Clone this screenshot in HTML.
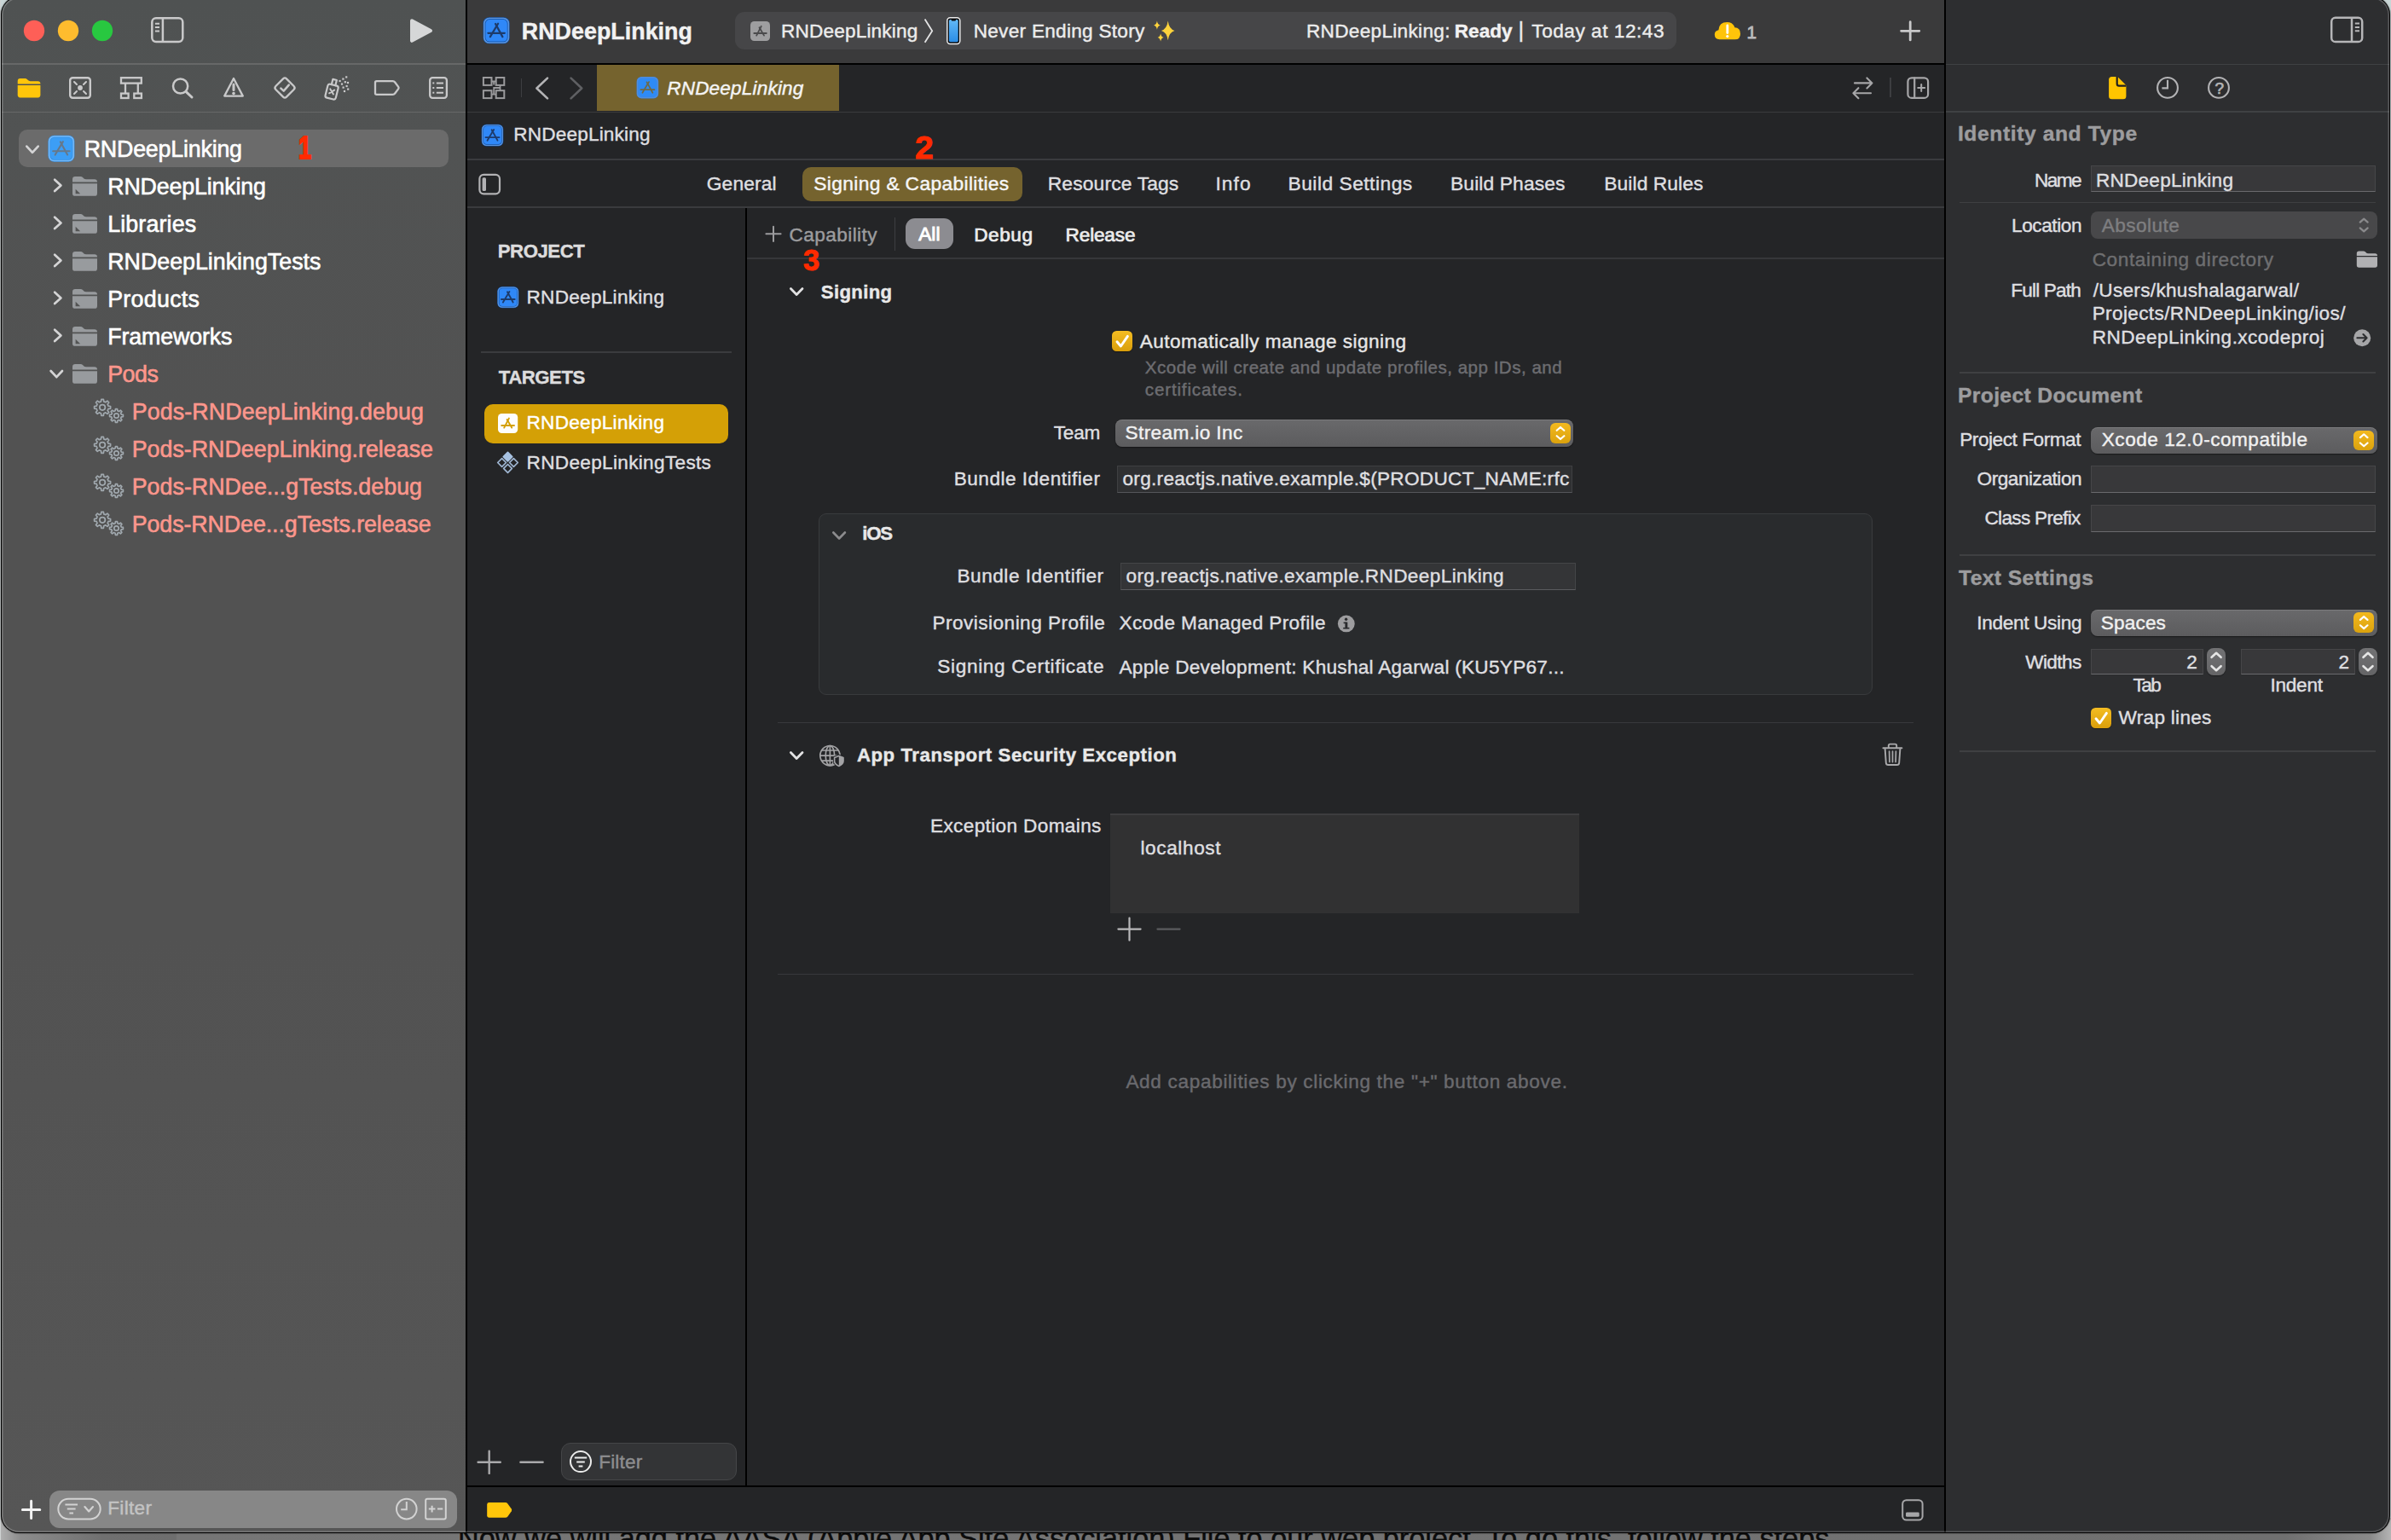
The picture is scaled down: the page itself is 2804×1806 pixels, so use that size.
<!DOCTYPE html>
<html lang="en"><head><meta charset="utf-8"><title>RNDeepLinking — Signing &amp; Capabilities</title>
<style>
*{box-sizing:border-box;margin:0;padding:0}
html,body{width:2804px;height:1806px;overflow:hidden;background:#c4d4d4}
body{font-family:"Liberation Sans",sans-serif;position:relative}
#root{position:absolute;left:0;top:0;width:2804px;height:1806px;overflow:hidden;background:#c9d6d6}
.a{position:absolute}
.t{position:absolute;white-space:pre;line-height:1;-webkit-text-stroke:0.42px}
svg{position:absolute;overflow:visible}
.ln{position:absolute;height:2px}
</style></head>
<body><div id="root">
<div class="a" style="left:0;top:1780px;width:2804px;height:26px;background:linear-gradient(90deg,#b0b0b0 0px,#8c8c8c 24px,#707070 120px,#6e6e6e 206px,#767676 208px,#707070 2680px,#8a8a8a 2780px,#b4b4b4 2804px)"></div>
<span class="t" id="btm" style="left:537px;top:1787px;font-size:34.3px;color:#0c0c0c;letter-spacing:0px">Now we will add the AASA (Apple App Site Association) File to our web project. To do this, follow the steps</span>
<div class="a" style="left:0;top:0;width:1.4px;height:1806px;background:#cfd3d3"></div>
<div class="a" style="left:1px;top:-4px;width:2802px;height:1802px;border-radius:21px;background:#000;box-shadow:0 0 2px rgba(0,0,0,.6)"></div>
<div class="a" id="win" style="left:2px;top:-3px;width:2800px;height:1800px;border-radius:20px;overflow:hidden">
<div class="a" style="left:-2px;top:3px;width:2804px;height:1806px">
<div class="a" style="left:2px;top:0px;width:544px;height:1797px;background:linear-gradient(#4f5252 0px,#515353 160px,#525252 500px,#525252 1100px,#565656 1797px)"></div>
<div class="a" style="left:2px;top:74px;width:544px;height:1.5px;background:#676868"></div>
<div class="a" style="left:2px;top:130.5px;width:544px;height:1.5px;background:#676868"></div>
<div class="a" style="left:546px;top:0px;width:2px;height:1797px;background:#000"></div>
<div class="a" style="left:548px;top:0px;width:1732px;height:74px;background:#3a3a3b"></div>
<div class="a" style="left:548px;top:74px;width:1732px;height:2px;background:#000"></div>
<div class="a" style="left:548px;top:76px;width:1732px;height:1721px;background:#242527"></div>
<div class="a" style="left:548px;top:130.5px;width:1732px;height:1.5px;background:#3a3b3e"></div>
<div class="a" style="left:548px;top:186px;width:1732px;height:1.5px;background:#3a3b3e"></div>
<div class="a" style="left:548px;top:242.3px;width:1732px;height:1.5px;background:#3a3b3e"></div>
<div class="a" style="left:876px;top:302px;width:1404px;height:1.5px;background:#36373a"></div>
<div class="a" style="left:699.8px;top:76px;width:284.4px;height:54.3px;background:#75632e"></div>
<div class="a" style="left:874px;top:243.8px;width:2.3px;height:1498.2px;background:#000"></div>
<div class="a" style="left:548px;top:1742px;width:1732px;height:2px;background:#000"></div>
<div class="a" style="left:2280px;top:0px;width:2px;height:1797px;background:#000"></div>
<div class="a" style="left:2282px;top:0px;width:520px;height:1797px;background:#2d2e30"></div>
<div class="a" style="left:2282px;top:74.5px;width:520px;height:1.5px;background:#3f4143"></div>
<div class="a" style="left:2282px;top:130px;width:520px;height:1.5px;background:#3f4143"></div>

<div class="a" style="left:22px;top:152px;width:504px;height:43.5px;background:#6b6b6b;border-radius:10px"></div>
<div class="a" style="left:58px;top:1748px;width:477.8px;height:43.6px;background:#878787;border-radius:12px"></div>
<div class="a" style="left:862px;top:14px;width:1104px;height:44px;background:#464648;border-radius:11px"></div>
<div class="a" style="left:941px;top:196px;width:257.6px;height:40px;background:#75632e;border-radius:10px"></div>
<div class="a" style="left:1062px;top:256px;width:56px;height:35.8px;background:#8c8c91;border-radius:11px"></div>
<div class="a" style="left:1048.5px;top:254.7px;width:1.5px;height:38.9px;background:#3d3e41"></div>
<div class="a" style="left:610.5px;top:91.6px;width:1.5px;height:22.4px;background:#3d3e41"></div>
<div class="a" style="left:2216px;top:90.8px;width:1.5px;height:23.2px;background:#3d3e41"></div>
<div class="a" style="left:563.8px;top:412.3px;width:294.4px;height:1.5px;background:#3a3b3e"></div>
<div class="a" style="left:568px;top:474px;width:286.2px;height:45.8px;background:#d4a006;border-radius:10px"></div>
<div class="a" style="left:658.3px;top:1692.3px;width:205.6px;height:43.3px;background:#333436;border:1.5px solid #454648;border-radius:11px"></div>
<div class="a" style="left:1304px;top:388px;width:24px;height:24.2px;background:linear-gradient(#f5bd22,#d99e0b);border-radius:5.5px;box-shadow:0 0.5px 1px rgba(0,0,0,.4)"></div>
<div class="a" style="left:1308px;top:492.2px;width:537.3px;height:31.4px;background:linear-gradient(#69696b,#5c5c5e);border-radius:8px;box-shadow:0 1px 1.5px rgba(0,0,0,.45), inset 0 1px 0 rgba(255,255,255,.12)"></div>
<div class="a" style="left:1818px;top:496px;width:24px;height:24px;background:linear-gradient(#f3b91e,#dba20d);border-radius:6px"></div>
<div class="a" style="left:1310.2px;top:546.4px;width:533.6px;height:31.4px;background:#2f3032;border:1px solid #3f4042;border-bottom-color:#55565a"></div>
<div class="a" style="left:960.2px;top:602.4px;width:1235.5px;height:213.0px;background:#292b2d;border:1.5px solid #393b3d;border-radius:9px"></div>
<div class="a" style="left:1314px;top:660.4px;width:534px;height:31.2px;background:#343537;border:1px solid #444547;border-bottom-color:#5a5b5e"></div>
<div class="a" style="left:912px;top:846.5px;width:1332px;height:1.5px;background:#38393c"></div>
<div class="a" style="left:912px;top:1141.8px;width:1332px;height:1.5px;background:#38393c"></div>
<div class="a" style="left:1302px;top:954px;width:550px;height:117.4px;background:#313132;border-top:2px solid #3d3d3f"></div>
<div class="a" style="left:2452px;top:194.4px;width:334px;height:31.1px;background:#38383a;border:1px solid #464648;border-bottom-color:#6a6a6d"></div>
<div class="a" style="left:2298px;top:236.5px;width:488px;height:1.5px;background:#3f4042"></div>
<div class="a" style="left:2452px;top:248.2px;width:336px;height:31.6px;background:#48484a;border-radius:8px"></div>
<div class="a" style="left:2298px;top:436px;width:488px;height:1.5px;background:#3f4042"></div>
<div class="a" style="left:2452px;top:500.5px;width:336px;height:31.1px;background:linear-gradient(#69696b,#5c5c5e);border-radius:8px;box-shadow:0 1px 1.5px rgba(0,0,0,.45), inset 0 1px 0 rgba(255,255,255,.12)"></div>
<div class="a" style="left:2760.3px;top:504.5px;width:23.7px;height:23.6px;background:linear-gradient(#f3b91e,#dba20d);border-radius:6px"></div>
<div class="a" style="left:2452px;top:546.1px;width:334px;height:31.6px;background:#38383a;border:1px solid #464648;border-bottom-color:#6a6a6d"></div>
<div class="a" style="left:2452px;top:592.4px;width:334px;height:31.4px;background:#38383a;border:1px solid #464648;border-bottom-color:#6a6a6d"></div>
<div class="a" style="left:2298px;top:650.2px;width:488px;height:1.5px;background:#3f4042"></div>
<div class="a" style="left:2452px;top:714.5px;width:336px;height:31.1px;background:linear-gradient(#69696b,#5c5c5e);border-radius:8px;box-shadow:0 1px 1.5px rgba(0,0,0,.45), inset 0 1px 0 rgba(255,255,255,.12)"></div>
<div class="a" style="left:2760.3px;top:718.4px;width:23.7px;height:23.4px;background:linear-gradient(#f3b91e,#dba20d);border-radius:6px"></div>
<div class="a" style="left:2452px;top:760.6px;width:132px;height:30.8px;background:#38383a;border:1px solid #464648;border-bottom-color:#6a6a6d"></div>
<div class="a" style="left:2627.7px;top:760.6px;width:134.0px;height:30.8px;background:#38383a;border:1px solid #464648;border-bottom-color:#6a6a6d"></div>
<div class="a" style="left:2588px;top:760px;width:22.2px;height:32px;background:linear-gradient(#727274,#646466);border-radius:8px;box-shadow:0 1px 1px rgba(0,0,0,.4)"></div>
<div class="a" style="left:2766px;top:760px;width:22px;height:32px;background:linear-gradient(#727274,#646466);border-radius:8px;box-shadow:0 1px 1px rgba(0,0,0,.4)"></div>
<div class="a" style="left:2452px;top:830px;width:24.2px;height:24.1px;background:linear-gradient(#f5bd22,#d99e0b);border-radius:5.5px;box-shadow:0 0.5px 1px rgba(0,0,0,.4)"></div>
<div class="a" style="left:2298px;top:880.3px;width:488px;height:1.5px;background:#3f4042"></div>

<svg width="2804" height="1806" viewBox="0 0 2804 1806" style="left:0;top:0">
<circle cx="40" cy="36" r="12.2" fill="#fe5f57"/><circle cx="80" cy="36" r="12.2" fill="#febc2e"/><circle cx="120" cy="36" r="12.2" fill="#28c840"/><g fill="none" stroke="#c9c9ca" stroke-width="2.5"><rect x="178.3" y="21.3" width="36" height="27.6" rx="4.6"/><path d="M190.9 21.3V48.9"/><path d="M181.9 27.7H187M181.9 32.1H187M181.9 36.5H187" stroke-width="2"/></g><path d="M483 24.2 L505 36 L483 47.8 Z" fill="#d6d7d8" stroke="#d6d7d8" stroke-width="4" stroke-linejoin="round"/><path d="M20.7 95.13 Q20.7 92.0 23.65 92.0 H29.45 Q30.83 92.0 31.75 92.98 L33.13 94.35 Q33.87 95.13 35.43 95.13 H44.45 Q47.4 95.13 47.4 98.07 V98.46 H20.7 Z" fill="#ffc60a"/><path d="M20.7 100.02 H47.4 V111.37 Q47.4 114.5 44.45 114.5 H23.65 Q20.7 114.5 20.7 111.37 Z" fill="#ffc60a"/><g fill="none" stroke="#c9c9ca" stroke-width="2.4" stroke-linecap="round"><rect x="82.2" y="91.2" width="23.6" height="23.6" rx="3"/><path d="M98 99L101 96M90 99L87 96M98 107L101 110M90 107L87 110" stroke-width="2.1"/></g><circle cx="94" cy="103" r="2.9" fill="#c9c9ca"/><g fill="none" stroke="#c9c9ca" stroke-width="2.3"><rect x="142" y="91.2" width="23.8" height="6.4"/><path d="M147 97.6V109.5M161.8 97.6V109.5"/><rect x="142" y="109.6" width="8.6" height="5.4"/><rect x="157.3" y="109.6" width="8.6" height="5.4"/></g><g fill="none" stroke="#c9c9ca" stroke-width="2.5" stroke-linecap="round"><circle cx="211.6" cy="101" r="8.6"/><path d="M218.2 107.6L225 114" stroke-width="3"/></g><path d="M274 92 L284.8 112.6 H263.2 Z" fill="none" stroke="#c9c9ca" stroke-width="2.3" stroke-linejoin="round"/><path d="M274 99V105.6" stroke="#c9c9ca" stroke-width="3" stroke-linecap="round"/><circle cx="274" cy="109.6" r="1.8" fill="#c9c9ca"/><g fill="none" stroke="#c9c9ca" stroke-width="2.3" stroke-linejoin="round" stroke-linecap="round"><rect x="325.1" y="94.1" width="17.8" height="17.8" rx="2.8" transform="rotate(45 334 103)"/><path d="M329.4 103.6 L332.7 106.6 L338.8 99.6" stroke-width="2.5"/></g><g transform="rotate(14 389.5 106)" fill="none" stroke="#c9c9ca" stroke-width="2.2" stroke-linejoin="round" stroke-linecap="round"><rect x="383.2" y="99.5" width="12.6" height="16.4" rx="2.4"/><path d="M387.2 99.5V93H391.8V99.5"/><path d="M387 105L392 110M392 105L387 110" stroke-width="2"/></g><rect x="397.5" y="93.9" width="2.2" height="2.2" fill="#c9c9ca"/><rect x="401.29999999999995" y="91.5" width="2.2" height="2.2" fill="#c9c9ca"/><rect x="405.09999999999997" y="89.30000000000001" width="2.2" height="2.2" fill="#c9c9ca"/><rect x="399.9" y="97.5" width="2.2" height="2.2" fill="#c9c9ca"/><rect x="403.7" y="95.10000000000001" width="2.2" height="2.2" fill="#c9c9ca"/><rect x="406.9" y="95.9" width="2.2" height="2.2" fill="#c9c9ca"/><rect x="401.5" y="101.5" width="2.2" height="2.2" fill="#c9c9ca"/><rect x="405.5" y="99.9" width="2.2" height="2.2" fill="#c9c9ca"/><rect x="407.09999999999997" y="103.5" width="2.2" height="2.2" fill="#c9c9ca"/><rect x="402.9" y="105.9" width="2.2" height="2.2" fill="#c9c9ca"/><path d="M441.6 95.2 H460.6 Q462.2 95.2 463.2 96.5 L467.2 101.8 Q468 103 467.2 104.2 L463.2 109.5 Q462.2 110.8 460.6 110.8 H441.6 Q440 110.8 440 109.2 V96.8 Q440 95.2 441.6 95.2 Z" fill="none" stroke="#c9c9ca" stroke-width="2.3"/><g fill="none" stroke="#c9c9ca" stroke-width="2.3"><rect x="504.2" y="91.2" width="19.7" height="23.6" rx="3"/><path d="M511.8 97.4H520M511.8 103H520M511.8 108.7H520" stroke-width="2"/></g><rect x="507.3" y="96.4" width="2" height="2" fill="#c9c9ca"/><rect x="507.3" y="102" width="2" height="2" fill="#c9c9ca"/><rect x="507.3" y="107.7" width="2" height="2" fill="#c9c9ca"/>
<g transform="translate(566.6 20.3)"><rect x="0" y="0" width="31.0" height="31.0" rx="7.03" fill="#0c50a8"/><rect x="0.47" y="0.47" width="30.07" height="30.07" rx="6.61" fill="#5b94de"/><rect x="2.07" y="2.07" width="26.87" height="26.87" rx="5.17" fill="#0c50a8"/><rect x="2.79" y="2.79" width="25.42" height="25.42" rx="4.55" fill="#2f88f8"/><g stroke="#1c3560" stroke-width="2.27" stroke-linecap="round" fill="none" opacity="0.92"><path d="M17.46 7.44 L8.27 22.84"/><path d="M14.47 7.75 L22.73 22.84"/><path d="M5.79 18.5 H25.21"/></g></g><rect x="880" y="25" width="23" height="23" rx="4.5" fill="#9e9ea0"/><g stroke="#4b4b4d" stroke-width="1.8" stroke-linecap="round" fill="none"><path d="M892.7 30.8L887.2 41.6"/><path d="M890.5 32.2L896 41.6"/><path d="M884.3 39H898.8"/></g><path d="M1084.6 22.6 L1093.2 36.2 L1084.6 49.8" fill="none" stroke="#e4e4e5" stroke-width="1.8" stroke-linejoin="miter"/><linearGradient id="phg" x1="0" y1="0" x2="0" y2="1"><stop offset="0" stop-color="#62b8f6"/><stop offset="1" stop-color="#2a8de6"/></linearGradient><rect x="1110.8" y="20.8" width="15" height="30.6" rx="3.4" fill="#0b0b0c" stroke="#e9e9ea" stroke-width="1.5"/><rect x="1112.9" y="23" width="10.8" height="26.2" rx="1.6" fill="url(#phg)"/><rect x="1115.6" y="22.4" width="5.4" height="2" rx="1" fill="#0b0b0c"/><path d="M1369.7 24.5 Q1370.948 34.076 1377.5 35.9 Q1370.948 37.724 1369.7 47.3 Q1368.452 37.724 1361.9 35.9 Q1368.452 34.076 1369.7 24.5 Z" fill="#fdd33c"/><path d="M1356.9 24.400000000000002 Q1357.5240000000001 28.768 1360.8000000000002 29.6 Q1357.5240000000001 30.432000000000002 1356.9 34.800000000000004 Q1356.276 30.432000000000002 1353.0 29.6 Q1356.276 28.768 1356.9 24.400000000000002 Z" fill="#fdd33c"/><path d="M1361.1 39.199999999999996 Q1361.6599999999999 43.147999999999996 1364.6 43.9 Q1361.6599999999999 44.652 1361.1 48.6 Q1360.54 44.652 1357.6 43.9 Q1360.54 43.147999999999996 1361.1 39.199999999999996 Z" fill="#fdd33c"/><path d="M2016.6 46.2 Q2010.8 46.2 2010.8 40.6 Q2010.8 36 2015.4 35.2 Q2016 26 2025.4 26 Q2032.2 26 2034.4 32.2 Q2041 32.6 2041 39.4 Q2041 46.2 2034.6 46.2 Z" fill="#ffc40a"/><path d="M2025.8 30V38.6" stroke="#fff" stroke-width="2.8" stroke-linecap="round"/><circle cx="2025.8" cy="42.6" r="1.6" fill="#fff"/><path d="M2229.6 36.3H2250.8M2240.2 25.7V46.9" stroke="#c9c9ca" stroke-width="2.8" stroke-linecap="round"/><g fill="none" stroke="#b6b6b8" stroke-width="2.5"><rect x="2734.2" y="20.8" width="36" height="28.2" rx="4.6"/><path d="M2758 20.8V49"/><path d="M2761.8 27.6H2767M2761.8 31.9H2767M2761.8 36.2H2767" stroke-width="2"/></g><g fill="none" stroke="#9b9b9d" stroke-width="2"><rect x="566.9" y="91" width="9.6" height="8.9"/><rect x="581.7" y="91" width="9.6" height="8.9"/><rect x="566.9" y="106.2" width="9.6" height="8.9"/><rect x="581.7" y="106.2" width="9.6" height="8.9"/><path d="M576.5 95.5H581.7M576.5 110.6H581.7M586.5 99.9V106.2M579.2 95.5V99.5M579.2 110.6V103H586.5" stroke-width="1.8"/></g><path d="M642 91.6 L629.4 103.5 L642 115.4" fill="none" stroke="#b4b4b6" stroke-width="2.6" stroke-linecap="round" stroke-linejoin="round"/><path d="M669.6 91.6 L682.2 103.5 L669.6 115.4" fill="none" stroke="#5f6063" stroke-width="2.6" stroke-linecap="round" stroke-linejoin="round"/><g transform="translate(746.6 89.9)"><rect x="0" y="0" width="25.6" height="25.6" rx="5.8" fill="#3a84e6"/><rect x="0.38" y="0.38" width="24.83" height="24.83" rx="5.46" fill="#4f8fdf"/><rect x="1.71" y="1.71" width="22.19" height="22.19" rx="4.27" fill="#3a84e6"/><rect x="2.3" y="2.3" width="20.99" height="20.99" rx="3.75" fill="#2e8bf6"/><g stroke="#6e6a48" stroke-width="1.71" stroke-linecap="round" fill="none" opacity="1"><path d="M14.42 6.14 L6.83 18.86"/><path d="M11.95 6.4 L18.77 18.86"/><path d="M4.78 15.27 H20.82"/></g></g><g fill="none" stroke="#a6a6a8" stroke-width="2.1" stroke-linecap="round" stroke-linejoin="round"><path d="M2175 97.4H2195.4M2189.4 91.4L2195.4 97.4L2189.4 103.4"/><path d="M2194 109.2H2173.4M2179.4 103.2L2173.4 109.2L2179.4 115.2"/></g><g fill="none" stroke="#a6a6a8" stroke-width="2.2" stroke-linecap="round"><rect x="2237.4" y="91.3" width="23.7" height="23.6" rx="4.5"/><path d="M2245.2 91.3V114.9"/><path d="M2249.2 103.1H2257.2M2253.2 99.1V107.1" stroke-width="2"/></g><g transform="translate(564.7 145.8)"><rect x="0" y="0" width="25.6" height="25.6" rx="5.8" fill="#0c50a8"/><rect x="0.38" y="0.38" width="24.83" height="24.83" rx="5.46" fill="#5b94de"/><rect x="1.71" y="1.71" width="22.19" height="22.19" rx="4.27" fill="#0c50a8"/><rect x="2.3" y="2.3" width="20.99" height="20.99" rx="3.75" fill="#2f88f8"/><g stroke="#1c3560" stroke-width="1.88" stroke-linecap="round" fill="none" opacity="0.92"><path d="M14.42 6.14 L6.83 18.86"/><path d="M11.95 6.4 L18.77 18.86"/><path d="M4.78 15.27 H20.82"/></g></g><rect x="562.4" y="204.9" width="23.6" height="22.4" rx="4.8" fill="none" stroke="#b2b2b4" stroke-width="2.2"/><rect x="565.6" y="208.2" width="4.4" height="15.8" rx="1.6" fill="#b2b2b4"/><g transform="translate(583.2 336)"><rect x="0" y="0" width="25.2" height="25.2" rx="5.71" fill="#0c50a8"/><rect x="0.38" y="0.38" width="24.44" height="24.44" rx="5.38" fill="#5b94de"/><rect x="1.68" y="1.68" width="21.84" height="21.84" rx="4.2" fill="#0c50a8"/><rect x="2.27" y="2.27" width="20.66" height="20.66" rx="3.7" fill="#2f88f8"/><g stroke="#1c3560" stroke-width="1.85" stroke-linecap="round" fill="none" opacity="0.92"><path d="M14.2 6.05 L6.72 18.56"/><path d="M11.76 6.3 L18.48 18.56"/><path d="M4.7 15.04 H20.5"/></g></g><rect x="584" y="485" width="23.2" height="23" rx="4.5" fill="#fdfdfd"/><g stroke="#d4a006" stroke-width="1.9" stroke-linecap="round" fill="none"><path d="M596.9 490.6L591.2 501.6"/><path d="M594.6 492L600.2 501.6"/><path d="M588.2 499H603"/></g><path d="M595.5 530.4 L600.7 535.6 L595.5 540.8000000000001 L590.3 535.6 Z" fill="#a8c3e3" stroke="#a8c3e3" stroke-width="1.7" stroke-linejoin="round"/><path d="M588.6 537.6 L593.5 542.5 L588.6 547.4 L583.7 542.5 Z" fill="none" stroke="#9fb6d2" stroke-width="1.7" stroke-linejoin="round"/><path d="M602.4 537.6 L607.3 542.5 L602.4 547.4 L597.5 542.5 Z" fill="none" stroke="#9fb6d2" stroke-width="1.7" stroke-linejoin="round"/><path d="M595.5 544.5 L600.4 549.4 L595.5 554.3 L590.6 549.4 Z" fill="none" stroke="#9fb6d2" stroke-width="1.7" stroke-linejoin="round"/><path d="M898.4 274.3H915.6M907 265.7V282.9" stroke="#9c9c9e" stroke-width="2" stroke-linecap="round"/><path d="M927.4000000000001 338.5 L934.2 345.5 L941.0 338.5" fill="none" stroke="#e2e2e3" stroke-width="2.8" stroke-linecap="round" stroke-linejoin="round"/><path d="M977.3000000000001 624.5 L984.1 631.5 L990.9 624.5" fill="none" stroke="#8b8b8d" stroke-width="2.6" stroke-linecap="round" stroke-linejoin="round"/><path d="M927.4000000000001 882.5 L934.2 889.5 L941.0 882.5" fill="none" stroke="#e2e2e3" stroke-width="2.8" stroke-linecap="round" stroke-linejoin="round"/><path d="M1310 400.8 L1314.4 406 L1322.4 394.4" fill="none" stroke="#fff" stroke-width="2.9" stroke-linecap="round" stroke-linejoin="round"/><path d="M2458 842.8 L2462.4 848 L2470.4 836.4" fill="none" stroke="#fff" stroke-width="2.9" stroke-linecap="round" stroke-linejoin="round"/><path d="M1825.7 504.8 L1830 501.0 L1834.3 504.8M1825.7 511.2 L1830 515.0 L1834.3 511.2" fill="none" stroke="#fff" stroke-width="2.2" stroke-linecap="round" stroke-linejoin="round"/><path d="M2767.8999999999996 513.0999999999999 L2772.2 509.2999999999999 L2776.5 513.0999999999999M2767.8999999999996 519.5 L2772.2 523.3 L2776.5 519.5" fill="none" stroke="#fff" stroke-width="2.2" stroke-linecap="round" stroke-linejoin="round"/><path d="M2767.8999999999996 726.9 L2772.2 723.1 L2776.5 726.9M2767.8999999999996 733.3000000000001 L2772.2 737.1 L2776.5 733.3000000000001" fill="none" stroke="#fff" stroke-width="2.2" stroke-linecap="round" stroke-linejoin="round"/><path d="M2767.7 260.6 L2772.2 256.6 L2776.7 260.6M2767.7 267.4 L2772.2 271.4 L2776.7 267.4" fill="none" stroke="#8a8a8c" stroke-width="2.2" stroke-linecap="round" stroke-linejoin="round"/><path d="M2593.6 770.8 L2599.1 765.8 L2604.6 770.8M2593.6 781.2 L2599.1 786.2 L2604.6 781.2" fill="none" stroke="#e6e6e6" stroke-width="2.6" stroke-linecap="round" stroke-linejoin="round"/><path d="M2771.5 770.8 L2777 765.8 L2782.5 770.8M2771.5 781.2 L2777 786.2 L2782.5 781.2" fill="none" stroke="#e6e6e6" stroke-width="2.6" stroke-linecap="round" stroke-linejoin="round"/><circle cx="1578.8" cy="731.4" r="9.9" fill="#9d9d9f"/><rect x="1577.4" y="729.6" width="2.9" height="7.6" fill="#2a2b2d"/><rect x="1575.6" y="729.6" width="3.4" height="1.6" fill="#2a2b2d"/><rect x="1575.2" y="735.9" width="7.2" height="1.6" fill="#2a2b2d"/><circle cx="1578.6" cy="726.2" r="1.7" fill="#2a2b2d"/>
<g fill="none" stroke="#a3a3a5" stroke-width="1.7"><circle cx="973.4" cy="886.1" r="11.6"/><ellipse cx="973.4" cy="886.1" rx="5.2" ry="11.6"/><path d="M973.4 874.5V897.7M961.8 886.1H985M963.6 880H983.2M963.6 892.2H983.2"/></g><path d="M983.8 884.6 L990.6 887.2 V892.6 Q990.6 897.4 983.8 900 Q977 897.4 977 892.6 V887.2 Z" fill="#232427"/><path d="M983.8 886.4 L989 888.4 V892.6 Q989 896.2 983.8 898.4 Q978.6 896.2 978.6 892.6 V888.4 Z" fill="none" stroke="#a3a3a5" stroke-width="1.6" stroke-linejoin="round"/><path d="M983.8 886.4 L989 888.4 V892.6 Q989 896.2 983.8 898.4 Z" fill="#a3a3a5"/><g fill="none" stroke="#a9a9ab" stroke-width="1.9" stroke-linecap="round" stroke-linejoin="round"><path d="M2208.4 877.2H2230.4"/><path d="M2214.8 877V874.4Q2214.8 872.6 2216.6 872.6H2222.4Q2224.2 872.6 2224.2 874.4V877"/><path d="M2210.6 877.6L2211.8 894.6Q2212 897 2214.4 897H2224.6Q2227 897 2227.2 894.6L2228.4 877.6"/><path d="M2215.6 881L2215.9 893.6M2219.5 881V893.6M2223.4 881L2223.1 893.6" stroke-width="1.7"/></g><path d="M1311.4 1089.6H1337.6M1324.5 1076.5V1102.7" stroke="#b9b9bb" stroke-width="2.2" stroke-linecap="round"/><path d="M1357.4 1089.6H1383.6" stroke="#5b5c5f" stroke-width="2.2" stroke-linecap="round"/><path d="M2476.6 89.9 H2483.4 L2493.4 99.9 V112.8 Q2493.4 116.3 2489.9 116.3 H2476.6 Q2473.1 116.3 2473.1 112.8 V93.4 Q2473.1 89.9 2476.6 89.9 Z" fill="#ffc500"/><path d="M2482.7 89.9 V98.2 Q2482.7 100.6 2485.1 100.6 H2493.4" fill="none" stroke="#1e1e20" stroke-width="2.2"/><g fill="none" stroke="#b3b3b5" stroke-width="2.1" stroke-linecap="butt"><circle cx="2542" cy="102.9" r="11.9"/><path d="M2542 93.8V103.4H2535.4"/><circle cx="2602" cy="102.9" r="11.9"/></g><path d="M2763.8 297.17 Q2763.8 294.5 2766.47 294.5 H2771.73 Q2772.98 294.5 2773.81 295.33 L2775.07 296.5 Q2775.73 297.17 2777.15 297.17 H2785.33 Q2788.0 297.17 2788.0 299.68 V300.01 H2763.8 Z" fill="#b1b1b3"/><path d="M2763.8 301.35 H2788.0 V311.03 Q2788.0 313.7 2785.33 313.7 H2766.47 Q2763.8 313.7 2763.8 311.03 Z" fill="#b1b1b3"/><circle cx="2770.2" cy="396.2" r="10" fill="#a6a6a8"/><path d="M2764.4 396.2H2775.4M2771.4 392L2775.6 396.2L2771.4 400.4" fill="none" stroke="#2d2e30" stroke-width="2.1" stroke-linecap="round" stroke-linejoin="round"/><path d="M31.3 171.6 L38 178.79999999999998 L44.7 171.6" fill="none" stroke="#d4d4d5" stroke-width="2.7" stroke-linecap="round" stroke-linejoin="round"/><g transform="translate(56.4 158.7)"><rect x="0" y="0" width="31.0" height="31.0" rx="7.03" fill="#3390e6"/><rect x="0.47" y="0.47" width="30.07" height="30.07" rx="6.61" fill="#74b8f6"/><rect x="2.07" y="2.07" width="26.87" height="26.87" rx="5.17" fill="#3390e6"/><rect x="2.79" y="2.79" width="25.42" height="25.42" rx="4.55" fill="#3c9ef5"/><g stroke="#66788a" stroke-width="2.07" stroke-linecap="round" fill="none" opacity="1"><path d="M17.46 7.44 L8.27 22.84"/><path d="M14.47 7.75 L22.73 22.84"/><path d="M5.79 18.5 H25.21"/></g></g><path d="M64.14999999999999 210.70000000000002 L71.45 217.4 L64.14999999999999 224.1" fill="none" stroke="#d4d4d5" stroke-width="2.7" stroke-linecap="round" stroke-linejoin="round"/><path d="M85.0 210.17 Q85.0 207.0 88.2 207.0 H94.5 Q96.0 207.0 97.0 207.99 L98.5 209.38 Q99.3 210.17 101.0 210.17 H110.8 Q114.0 210.17 114.0 213.15 V213.54 H85.0 Z" fill="#989b9e"/><path d="M85.0 215.13 H114.0 V226.63 Q114.0 229.8 110.8 229.8 H88.2 Q85.0 229.8 85.0 226.63 Z" fill="#989b9e"/><path d="M88.6 221.87 L94.2 227.22 H88.6 Z" fill="#535454"/><path d="M64.14999999999999 254.7 L71.45 261.4 L64.14999999999999 268.09999999999997" fill="none" stroke="#d4d4d5" stroke-width="2.7" stroke-linecap="round" stroke-linejoin="round"/><path d="M85.0 254.17 Q85.0 251.0 88.2 251.0 H94.5 Q96.0 251.0 97.0 251.99 L98.5 253.38 Q99.3 254.17 101.0 254.17 H110.8 Q114.0 254.17 114.0 257.15 V257.54 H85.0 Z" fill="#989b9e"/><path d="M85.0 259.13 H114.0 V270.63 Q114.0 273.8 110.8 273.8 H88.2 Q85.0 273.8 85.0 270.63 Z" fill="#989b9e"/><path d="M88.6 265.87 L94.2 271.22 H88.6 Z" fill="#535454"/><path d="M64.14999999999999 298.7 L71.45 305.4 L64.14999999999999 312.09999999999997" fill="none" stroke="#d4d4d5" stroke-width="2.7" stroke-linecap="round" stroke-linejoin="round"/><path d="M85.0 298.17 Q85.0 295.0 88.2 295.0 H94.5 Q96.0 295.0 97.0 295.99 L98.5 297.38 Q99.3 298.17 101.0 298.17 H110.8 Q114.0 298.17 114.0 301.15 V301.54 H85.0 Z" fill="#989b9e"/><path d="M85.0 303.13 H114.0 V314.63 Q114.0 317.8 110.8 317.8 H88.2 Q85.0 317.8 85.0 314.63 Z" fill="#989b9e"/><path d="M64.14999999999999 342.7 L71.45 349.4 L64.14999999999999 356.09999999999997" fill="none" stroke="#d4d4d5" stroke-width="2.7" stroke-linecap="round" stroke-linejoin="round"/><path d="M85.0 342.17 Q85.0 339.0 88.2 339.0 H94.5 Q96.0 339.0 97.0 339.99 L98.5 341.38 Q99.3 342.17 101.0 342.17 H110.8 Q114.0 342.17 114.0 345.15 V345.54 H85.0 Z" fill="#989b9e"/><path d="M85.0 347.13 H114.0 V358.63 Q114.0 361.8 110.8 361.8 H88.2 Q85.0 361.8 85.0 358.63 Z" fill="#989b9e"/><path d="M88.6 353.87 L94.2 359.22 H88.6 Z" fill="#535454"/><path d="M64.14999999999999 386.7 L71.45 393.4 L64.14999999999999 400.09999999999997" fill="none" stroke="#d4d4d5" stroke-width="2.7" stroke-linecap="round" stroke-linejoin="round"/><path d="M85.0 386.17 Q85.0 383.0 88.2 383.0 H94.5 Q96.0 383.0 97.0 383.99 L98.5 385.38 Q99.3 386.17 101.0 386.17 H110.8 Q114.0 386.17 114.0 389.15 V389.54 H85.0 Z" fill="#989b9e"/><path d="M85.0 391.13 H114.0 V402.63 Q114.0 405.8 110.8 405.8 H88.2 Q85.0 405.8 85.0 402.63 Z" fill="#989b9e"/><path d="M88.6 397.87 L94.2 403.22 H88.6 Z" fill="#535454"/><path d="M59.599999999999994 435.0 L66.3 442.20000000000005 L73.0 435.0" fill="none" stroke="#d4d4d5" stroke-width="2.7" stroke-linecap="round" stroke-linejoin="round"/><path d="M85.0 430.17 Q85.0 427.0 88.2 427.0 H94.5 Q96.0 427.0 97.0 427.99 L98.5 429.38 Q99.3 430.17 101.0 430.17 H110.8 Q114.0 430.17 114.0 433.15 V433.54 H85.0 Z" fill="#989b9e"/><path d="M85.0 435.13 H114.0 V446.63 Q114.0 449.8 110.8 449.8 H88.2 Q85.0 449.8 85.0 446.63 Z" fill="#989b9e"/><path d="M118.44 470.89 L118.82 468.29 L121.38 468.29 L121.76 470.89 L123.81 471.74 L125.92 470.17 L127.73 471.98 L126.16 474.09 L127.01 476.14 L129.61 476.52 L129.61 479.08 L127.01 479.46 L126.16 481.51 L127.73 483.62 L125.92 485.43 L123.81 483.86 L121.76 484.71 L121.38 487.31 L118.82 487.31 L118.44 484.71 L116.39 483.86 L114.28 485.43 L112.47 483.62 L114.04 481.51 L113.19 479.46 L110.59 479.08 L110.59 476.52 L113.19 476.14 L114.04 474.09 L112.47 471.98 L114.28 470.17 L116.39 471.74 Z" fill="none" stroke="#a0a8ae" stroke-width="1.7" stroke-linejoin="round"/><circle cx="120.1" cy="477.8" r="3.26" fill="none" stroke="#a0a8ae" stroke-width="1.7"/><path d="M135.12 481.74 L135.44 479.57 L137.56 479.57 L137.88 481.74 L139.59 482.45 L141.35 481.14 L142.86 482.65 L141.55 484.41 L142.26 486.12 L144.43 486.44 L144.43 488.56 L142.26 488.88 L141.55 490.59 L142.86 492.35 L141.35 493.86 L139.59 492.55 L137.88 493.26 L137.56 495.43 L135.44 495.43 L135.12 493.26 L133.41 492.55 L131.65 493.86 L130.14 492.35 L131.45 490.59 L130.74 488.88 L128.57 488.56 L128.57 486.44 L130.74 486.12 L131.45 484.41 L130.14 482.65 L131.65 481.14 L133.41 482.45 Z" fill="none" stroke="#a0a8ae" stroke-width="1.7" stroke-linejoin="round"/><circle cx="136.5" cy="487.5" r="2.72" fill="none" stroke="#a0a8ae" stroke-width="1.7"/><path d="M118.44 514.89 L118.82 512.29 L121.38 512.29 L121.76 514.89 L123.81 515.74 L125.92 514.17 L127.73 515.98 L126.16 518.09 L127.01 520.14 L129.61 520.52 L129.61 523.08 L127.01 523.46 L126.16 525.51 L127.73 527.62 L125.92 529.43 L123.81 527.86 L121.76 528.71 L121.38 531.31 L118.82 531.31 L118.44 528.71 L116.39 527.86 L114.28 529.43 L112.47 527.62 L114.04 525.51 L113.19 523.46 L110.59 523.08 L110.59 520.52 L113.19 520.14 L114.04 518.09 L112.47 515.98 L114.28 514.17 L116.39 515.74 Z" fill="none" stroke="#a0a8ae" stroke-width="1.7" stroke-linejoin="round"/><circle cx="120.1" cy="521.8" r="3.26" fill="none" stroke="#a0a8ae" stroke-width="1.7"/><path d="M135.12 525.74 L135.44 523.57 L137.56 523.57 L137.88 525.74 L139.59 526.45 L141.35 525.14 L142.86 526.65 L141.55 528.41 L142.26 530.12 L144.43 530.44 L144.43 532.56 L142.26 532.88 L141.55 534.59 L142.86 536.35 L141.35 537.86 L139.59 536.55 L137.88 537.26 L137.56 539.43 L135.44 539.43 L135.12 537.26 L133.41 536.55 L131.65 537.86 L130.14 536.35 L131.45 534.59 L130.74 532.88 L128.57 532.56 L128.57 530.44 L130.74 530.12 L131.45 528.41 L130.14 526.65 L131.65 525.14 L133.41 526.45 Z" fill="none" stroke="#a0a8ae" stroke-width="1.7" stroke-linejoin="round"/><circle cx="136.5" cy="531.5" r="2.72" fill="none" stroke="#a0a8ae" stroke-width="1.7"/><path d="M118.44 558.89 L118.82 556.29 L121.38 556.29 L121.76 558.89 L123.81 559.74 L125.92 558.17 L127.73 559.98 L126.16 562.09 L127.01 564.14 L129.61 564.52 L129.61 567.08 L127.01 567.46 L126.16 569.51 L127.73 571.62 L125.92 573.43 L123.81 571.86 L121.76 572.71 L121.38 575.31 L118.82 575.31 L118.44 572.71 L116.39 571.86 L114.28 573.43 L112.47 571.62 L114.04 569.51 L113.19 567.46 L110.59 567.08 L110.59 564.52 L113.19 564.14 L114.04 562.09 L112.47 559.98 L114.28 558.17 L116.39 559.74 Z" fill="none" stroke="#a0a8ae" stroke-width="1.7" stroke-linejoin="round"/><circle cx="120.1" cy="565.8" r="3.26" fill="none" stroke="#a0a8ae" stroke-width="1.7"/><path d="M135.12 569.74 L135.44 567.57 L137.56 567.57 L137.88 569.74 L139.59 570.45 L141.35 569.14 L142.86 570.65 L141.55 572.41 L142.26 574.12 L144.43 574.44 L144.43 576.56 L142.26 576.88 L141.55 578.59 L142.86 580.35 L141.35 581.86 L139.59 580.55 L137.88 581.26 L137.56 583.43 L135.44 583.43 L135.12 581.26 L133.41 580.55 L131.65 581.86 L130.14 580.35 L131.45 578.59 L130.74 576.88 L128.57 576.56 L128.57 574.44 L130.74 574.12 L131.45 572.41 L130.14 570.65 L131.65 569.14 L133.41 570.45 Z" fill="none" stroke="#a0a8ae" stroke-width="1.7" stroke-linejoin="round"/><circle cx="136.5" cy="575.5" r="2.72" fill="none" stroke="#a0a8ae" stroke-width="1.7"/><path d="M118.44 602.89 L118.82 600.29 L121.38 600.29 L121.76 602.89 L123.81 603.74 L125.92 602.17 L127.73 603.98 L126.16 606.09 L127.01 608.14 L129.61 608.52 L129.61 611.08 L127.01 611.46 L126.16 613.51 L127.73 615.62 L125.92 617.43 L123.81 615.86 L121.76 616.71 L121.38 619.31 L118.82 619.31 L118.44 616.71 L116.39 615.86 L114.28 617.43 L112.47 615.62 L114.04 613.51 L113.19 611.46 L110.59 611.08 L110.59 608.52 L113.19 608.14 L114.04 606.09 L112.47 603.98 L114.28 602.17 L116.39 603.74 Z" fill="none" stroke="#a0a8ae" stroke-width="1.7" stroke-linejoin="round"/><circle cx="120.1" cy="609.8" r="3.26" fill="none" stroke="#a0a8ae" stroke-width="1.7"/><path d="M135.12 613.74 L135.44 611.57 L137.56 611.57 L137.88 613.74 L139.59 614.45 L141.35 613.14 L142.86 614.65 L141.55 616.41 L142.26 618.12 L144.43 618.44 L144.43 620.56 L142.26 620.88 L141.55 622.59 L142.86 624.35 L141.35 625.86 L139.59 624.55 L137.88 625.26 L137.56 627.43 L135.44 627.43 L135.12 625.26 L133.41 624.55 L131.65 625.86 L130.14 624.35 L131.45 622.59 L130.74 620.88 L128.57 620.56 L128.57 618.44 L130.74 618.12 L131.45 616.41 L130.14 614.65 L131.65 613.14 L133.41 614.45 Z" fill="none" stroke="#a0a8ae" stroke-width="1.7" stroke-linejoin="round"/><circle cx="136.5" cy="619.5" r="2.72" fill="none" stroke="#a0a8ae" stroke-width="1.7"/><path d="M26.4 1770.4H46.8M36.6 1760.2V1780.6" stroke="#f2f2f2" stroke-width="3" stroke-linecap="round"/><rect x="68.3" y="1757.8" width="49.4" height="23.6" rx="11.8" fill="none" stroke="#d2d2d2" stroke-width="2"/><path d="M76.4 1764.4H91M78.8 1769.4H88.6M81.4 1774.4H86" stroke="#d2d2d2" stroke-width="2"/><path d="M99.4 1767.1 L104.2 1772.5 L109.0 1767.1" fill="none" stroke="#d2d2d2" stroke-width="2.2" stroke-linecap="round" stroke-linejoin="round"/><g fill="none" stroke="#d2d2d2" stroke-width="2"><circle cx="476.8" cy="1769.6" r="11.8"/><path d="M476.8 1761V1770.2H470.2"/><rect x="499.2" y="1757.8" width="23.6" height="23.6" rx="2"/><path d="M502.8 1769.6H510.4M506.6 1765.8V1773.4M513 1769.6H519.2"/></g><path d="M560.6 1714.8H586.8M573.7 1701.7V1727.9" stroke="#a9a9ab" stroke-width="2.4" stroke-linecap="round"/><path d="M610.4 1714.8H636.6" stroke="#a9a9ab" stroke-width="2.4" stroke-linecap="round"/><g fill="none" stroke="#ececec" stroke-width="2"><circle cx="681" cy="1714.1" r="12"/><path d="M673.8 1709.4H688.2M676.2 1714.4H685.8M678.6 1719.4H683.4"/></g><path d="M573.6 1762 H592.6 Q594.4 1762 595.4 1763.4 L599.8 1769.6 Q600.6 1770.9 599.8 1772.2 L595.4 1778.4 Q594.4 1779.8 592.6 1779.8 H573.6 Q571.2 1779.8 571.2 1777.4 V1764.4 Q571.2 1762 573.6 1762 Z" fill="#ffc60a"/><rect x="2231.2" y="1759.2" width="23.4" height="23.4" rx="4.5" fill="none" stroke="#a6a6a8" stroke-width="2"/><rect x="2235" y="1773.6" width="15.8" height="5.2" rx="1.4" fill="#a6a6a8"/>
</svg>
<span class="t" style="left:98.7px;top:162.4px;font-size:26.8px;color:#ffffff;letter-spacing:-0.198px;-webkit-text-stroke:0.6px;">RNDeepLinking</span>
<span class="t" style="left:126.2px;top:206.4px;font-size:26.8px;color:#ffffff;letter-spacing:-0.157px;-webkit-text-stroke:0.6px;">RNDeepLinking</span>
<span class="t" style="left:126.2px;top:250.4px;font-size:26.8px;color:#ffffff;letter-spacing:0.142px;-webkit-text-stroke:0.6px;">Libraries</span>
<span class="t" style="left:126.2px;top:294.4px;font-size:26.8px;color:#ffffff;-webkit-text-stroke:0.6px;">RNDeepLinkingTests</span>
<span class="t" style="left:126.2px;top:338.4px;font-size:26.8px;color:#ffffff;letter-spacing:0.293px;-webkit-text-stroke:0.6px;">Products</span>
<span class="t" style="left:126.2px;top:382.4px;font-size:26.8px;color:#ffffff;letter-spacing:-0.133px;-webkit-text-stroke:0.6px;">Frameworks</span>
<span class="t" style="left:126.2px;top:426.4px;font-size:26.8px;color:#fc968c;letter-spacing:-0.493px;-webkit-text-stroke:0.6px;">Pods</span>
<span class="t" style="left:154.7px;top:470.4px;font-size:26.8px;color:#fc968c;letter-spacing:0.116px;-webkit-text-stroke:0.6px;">Pods-RNDeepLinking.debug</span>
<span class="t" style="left:154.7px;top:514.4px;font-size:26.8px;color:#fc968c;letter-spacing:0.011px;-webkit-text-stroke:0.6px;">Pods-RNDeepLinking.release</span>
<span class="t" style="left:154.7px;top:558.4px;font-size:26.8px;color:#fc968c;letter-spacing:0.029px;-webkit-text-stroke:0.6px;">Pods-RNDee...gTests.debug</span>
<span class="t" style="left:154.7px;top:602.4px;font-size:26.8px;color:#fc968c;letter-spacing:-0.080px;-webkit-text-stroke:0.6px;">Pods-RNDee...gTests.release</span>
<span class="t" style="left:349.8px;top:155.9px;font-size:36.5px;color:#ff2a00;font-weight:700;transform:scaleX(0.739);transform-origin:0 0;-webkit-text-stroke:2.0px;">1</span>
<span class="t" style="left:126.2px;top:1758.1px;font-size:22.6px;color:#c3c3c3;letter-spacing:0.323px;">Filter</span>
<span class="t" style="left:611.8px;top:24.1px;font-size:26.8px;color:#f2f2f2;font-weight:700;letter-spacing:0.048px;">RNDeepLinking</span>
<span class="t" style="left:916.0px;top:25.8px;font-size:22.6px;color:#ececec;letter-spacing:0.168px;">RNDeepLinking</span>
<span class="t" style="left:1141.7px;top:25.8px;font-size:22.6px;color:#ececec;letter-spacing:0.276px;">Never Ending Story</span>
<span class="t" style="left:1531.9px;top:25.8px;font-size:22.6px;color:#ececec;letter-spacing:0.312px;">RNDeepLinking:</span>
<span class="t" style="left:1705.7px;top:25.8px;font-size:22.6px;color:#f2f2f2;font-weight:700;letter-spacing:0.038px;">Ready</span>
<span class="t" style="left:1780.6px;top:22.5px;font-size:25.5px;color:#ececec;">|</span>
<span class="t" style="left:1796.3px;top:25.8px;font-size:22.6px;color:#ececec;letter-spacing:0.534px;">Today at 12:43</span>
<span class="t" style="left:2048.4px;top:27.5px;font-size:20.6px;color:#bababc;-webkit-text-stroke:0.9px;">1</span>
<span class="t" style="left:782.2px;top:92.8px;font-size:22.6px;color:#f4f4f4;font-style:italic;letter-spacing:0.160px;">RNDeepLinking</span>
<span class="t" style="left:602.2px;top:146.8px;font-size:22.6px;color:#dfdfe0;letter-spacing:0.177px;">RNDeepLinking</span>
<span class="t" style="left:1073.2px;top:156.1px;font-size:36px;color:#ff2a00;font-weight:700;transform:scaleX(1.083);transform-origin:0 0;-webkit-text-stroke:0.9px;">2</span>
<span class="t" style="left:828.8px;top:203.5px;font-size:22.8px;color:#dfdfe0;letter-spacing:0.094px;">General</span>
<span class="t" style="left:1228.7px;top:203.5px;font-size:22.8px;color:#dfdfe0;letter-spacing:0.162px;">Resource Tags</span>
<span class="t" style="left:1425.5px;top:203.5px;font-size:22.8px;color:#dfdfe0;letter-spacing:1.018px;">Info</span>
<span class="t" style="left:1510.5px;top:203.5px;font-size:22.8px;color:#dfdfe0;letter-spacing:0.485px;">Build Settings</span>
<span class="t" style="left:1701.0px;top:203.5px;font-size:22.8px;color:#dfdfe0;letter-spacing:0.121px;">Build Phases</span>
<span class="t" style="left:1881.3px;top:203.5px;font-size:22.8px;color:#dfdfe0;letter-spacing:0.079px;">Build Rules</span>
<span class="t" style="left:954.3px;top:203.5px;font-size:22.8px;color:#f6f6f6;letter-spacing:0.340px;">Signing &amp; Capabilities</span>
<span class="t" style="left:583.7px;top:283.8px;font-size:22.2px;color:#dcdcdd;font-weight:700;letter-spacing:-0.440px;">PROJECT</span>
<span class="t" style="left:617.5px;top:337.5px;font-size:22.6px;color:#dfdfe0;letter-spacing:0.268px;">RNDeepLinking</span>
<span class="t" style="left:584.7px;top:431.8px;font-size:22.2px;color:#dcdcdd;font-weight:700;letter-spacing:-0.460px;">TARGETS</span>
<span class="t" style="left:617.5px;top:485.0px;font-size:22.6px;color:#ffffff;letter-spacing:0.268px;">RNDeepLinking</span>
<span class="t" style="left:617.5px;top:531.5px;font-size:22.6px;color:#dfdfe0;letter-spacing:0.319px;">RNDeepLinkingTests</span>
<span class="t" style="left:702.2px;top:1703.5px;font-size:22.6px;color:#8d8d8f;letter-spacing:0.183px;">Filter</span>
<span class="t" style="left:925.4px;top:264.5px;font-size:22.6px;color:#9c9c9e;letter-spacing:0.443px;">Capability</span>
<span class="t" style="left:1077.2px;top:264.1px;font-size:22.6px;color:#ffffff;letter-spacing:0.105px;-webkit-text-stroke:0.9px;">All</span>
<span class="t" style="left:1142.2px;top:264.8px;font-size:22.6px;color:#ececec;letter-spacing:0.547px;-webkit-text-stroke:0.7px;">Debug</span>
<span class="t" style="left:1249.6px;top:264.8px;font-size:22.6px;color:#ececec;letter-spacing:-0.172px;-webkit-text-stroke:0.7px;">Release</span>
<span class="t" style="left:942.2px;top:286.6px;font-size:35px;color:#ff2a00;font-weight:700;transform:scaleX(0.984);transform-origin:0 0;-webkit-text-stroke:0.9px;">3</span>
<span class="t" style="left:962.8px;top:331.8px;font-size:22.2px;color:#e8e8e8;font-weight:700;letter-spacing:0.336px;">Signing</span>
<span class="t" style="left:1336.8px;top:389.7px;font-size:22.6px;color:#e6e6e6;letter-spacing:0.448px;">Automatically manage signing</span>
<span class="t" style="left:1342.8px;top:421.0px;font-size:20.6px;color:#6d6d71;letter-spacing:0.483px;">Xcode will create and update profiles, app IDs, and</span>
<span class="t" style="left:1342.8px;top:446.6px;font-size:20.6px;color:#6d6d71;letter-spacing:0.831px;">certificates.</span>
<span class="t" style="left:1235.7px;top:497.1px;font-size:22.6px;color:#dfdfe0;letter-spacing:-0.176px;">Team</span>
<span class="t" style="left:1319.5px;top:497.1px;font-size:22.6px;color:#f0f0f0;letter-spacing:0.391px;">Stream.io Inc</span>
<span class="t" style="left:1118.7px;top:551.0px;font-size:22.6px;color:#dfdfe0;letter-spacing:0.496px;">Bundle Identifier</span>
<span class="t" style="left:1316.5px;top:551.0px;font-size:22.6px;color:#dfdfe0;letter-spacing:0.290px;">org.reactjs.native.example.$(PRODUCT_NAME:rfc</span>
<span class="t" style="left:1011.2px;top:615.3px;font-size:22.2px;color:#e8e8e8;font-weight:700;letter-spacing:-1.161px;">iOS</span>
<span class="t" style="left:1122.5px;top:665.2px;font-size:22.6px;color:#dfdfe0;letter-spacing:0.521px;">Bundle Identifier</span>
<span class="t" style="left:1320.5px;top:665.2px;font-size:22.6px;color:#dfdfe0;letter-spacing:0.380px;">org.reactjs.native.example.RNDeepLinking</span>
<span class="t" style="left:1093.5px;top:720.3px;font-size:22.6px;color:#dfdfe0;letter-spacing:0.467px;">Provisioning Profile</span>
<span class="t" style="left:1312.5px;top:720.4px;font-size:22.6px;color:#dfdfe0;letter-spacing:0.355px;">Xcode Managed Profile</span>
<span class="t" style="left:1099.3px;top:771.0px;font-size:22.6px;color:#dfdfe0;letter-spacing:0.662px;">Signing Certificate</span>
<span class="t" style="left:1312.5px;top:771.5px;font-size:22.6px;color:#dfdfe0;letter-spacing:0.269px;">Apple Development: Khushal Agarwal (KU5YP67...</span>
<span class="t" style="left:1004.9px;top:875.4px;font-size:22.2px;color:#e8e8e8;font-weight:700;letter-spacing:0.562px;">App Transport Security Exception</span>
<span class="t" style="left:1091.0px;top:957.8px;font-size:22.6px;color:#dfdfe0;letter-spacing:0.359px;">Exception Domains</span>
<span class="t" style="left:1337.5px;top:983.5px;font-size:22.6px;color:#dfdfe0;letter-spacing:0.601px;">localhost</span>
<span class="t" style="left:1320.4px;top:1257.8px;font-size:22.6px;color:#6a6a6e;letter-spacing:0.662px;">Add capabilities by clicking the &quot;+&quot; button above.</span>
<span class="t" style="left:2295.9px;top:144.5px;font-size:24.6px;color:#9c9c9e;font-weight:700;letter-spacing:0.610px;">Identity and Type</span>
<span class="t" style="left:2385.9px;top:200.5px;font-size:22.6px;color:#dfdfe0;letter-spacing:-1.501px;">Name</span>
<span class="t" style="left:2457.9px;top:200.5px;font-size:22.6px;color:#dfdfe0;letter-spacing:0.235px;">RNDeepLinking</span>
<span class="t" style="left:2359.0px;top:253.8px;font-size:22.6px;color:#dfdfe0;letter-spacing:-0.408px;">Location</span>
<span class="t" style="left:2464.8px;top:253.8px;font-size:22.6px;color:#7e7e80;letter-spacing:0.434px;">Absolute</span>
<span class="t" style="left:2453.7px;top:293.5px;font-size:22.6px;color:#6e6e70;letter-spacing:0.603px;">Containing directory</span>
<span class="t" style="left:2358.3px;top:329.8px;font-size:22.6px;color:#dfdfe0;letter-spacing:-0.837px;">Full Path</span>
<span class="t" style="left:2454.7px;top:329.8px;font-size:22.6px;color:#dfdfe0;letter-spacing:0.307px;">/Users/khushalagarwal/</span>
<span class="t" style="left:2453.7px;top:357.4px;font-size:22.6px;color:#dfdfe0;letter-spacing:0.354px;">Projects/RNDeepLinking/ios/</span>
<span class="t" style="left:2453.7px;top:385.4px;font-size:22.6px;color:#dfdfe0;letter-spacing:0.438px;">RNDeepLinking.xcodeproj</span>
<span class="t" style="left:2296.0px;top:451.8px;font-size:24.6px;color:#9c9c9e;font-weight:700;letter-spacing:0.383px;">Project Document</span>
<span class="t" style="left:2298.2px;top:505.4px;font-size:22.6px;color:#dfdfe0;letter-spacing:-0.452px;">Project Format</span>
<span class="t" style="left:2464.8px;top:505.4px;font-size:22.6px;color:#f0f0f0;letter-spacing:0.503px;">Xcode 12.0-compatible</span>
<span class="t" style="left:2318.6px;top:551.0px;font-size:22.6px;color:#dfdfe0;letter-spacing:-0.467px;">Organization</span>
<span class="t" style="left:2327.5px;top:597.3px;font-size:22.6px;color:#dfdfe0;letter-spacing:-0.703px;">Class Prefix</span>
<span class="t" style="left:2297.0px;top:665.7px;font-size:24.6px;color:#9c9c9e;font-weight:700;letter-spacing:0.440px;">Text Settings</span>
<span class="t" style="left:2318.3px;top:719.6px;font-size:22.6px;color:#dfdfe0;letter-spacing:-0.327px;">Indent Using</span>
<span class="t" style="left:2463.8px;top:719.6px;font-size:22.6px;color:#f0f0f0;letter-spacing:0.147px;">Spaces</span>
<span class="t" style="left:2375.2px;top:765.5px;font-size:22.6px;color:#dfdfe0;letter-spacing:-0.591px;">Widths</span>
<span class="t" style="left:2564.3px;top:765.5px;font-size:22.6px;color:#dfdfe0;">2</span>
<span class="t" style="left:2742.5px;top:765.5px;font-size:22.6px;color:#dfdfe0;">2</span>
<span class="t" style="left:2501.5px;top:793.0px;font-size:22.6px;color:#dfdfe0;letter-spacing:-1.581px;">Tab</span>
<span class="t" style="left:2662.4px;top:793.0px;font-size:22.6px;color:#dfdfe0;letter-spacing:-0.228px;">Indent</span>
<span class="t" style="left:2484.6px;top:830.9px;font-size:22.6px;color:#dfdfe0;letter-spacing:0.276px;">Wrap lines</span>
<span class="t" style="left:2597.6px;top:93.9px;font-size:19px;color:#b3b3b5;-webkit-text-stroke:0.7px;">?</span>

</div>
<div class="a" style="left:0;top:0;width:2800px;height:1800px;border-radius:20px;box-shadow:inset 0 0 0 1.6px rgba(255,255,255,.2)"></div>
</div>
</div></body></html>
